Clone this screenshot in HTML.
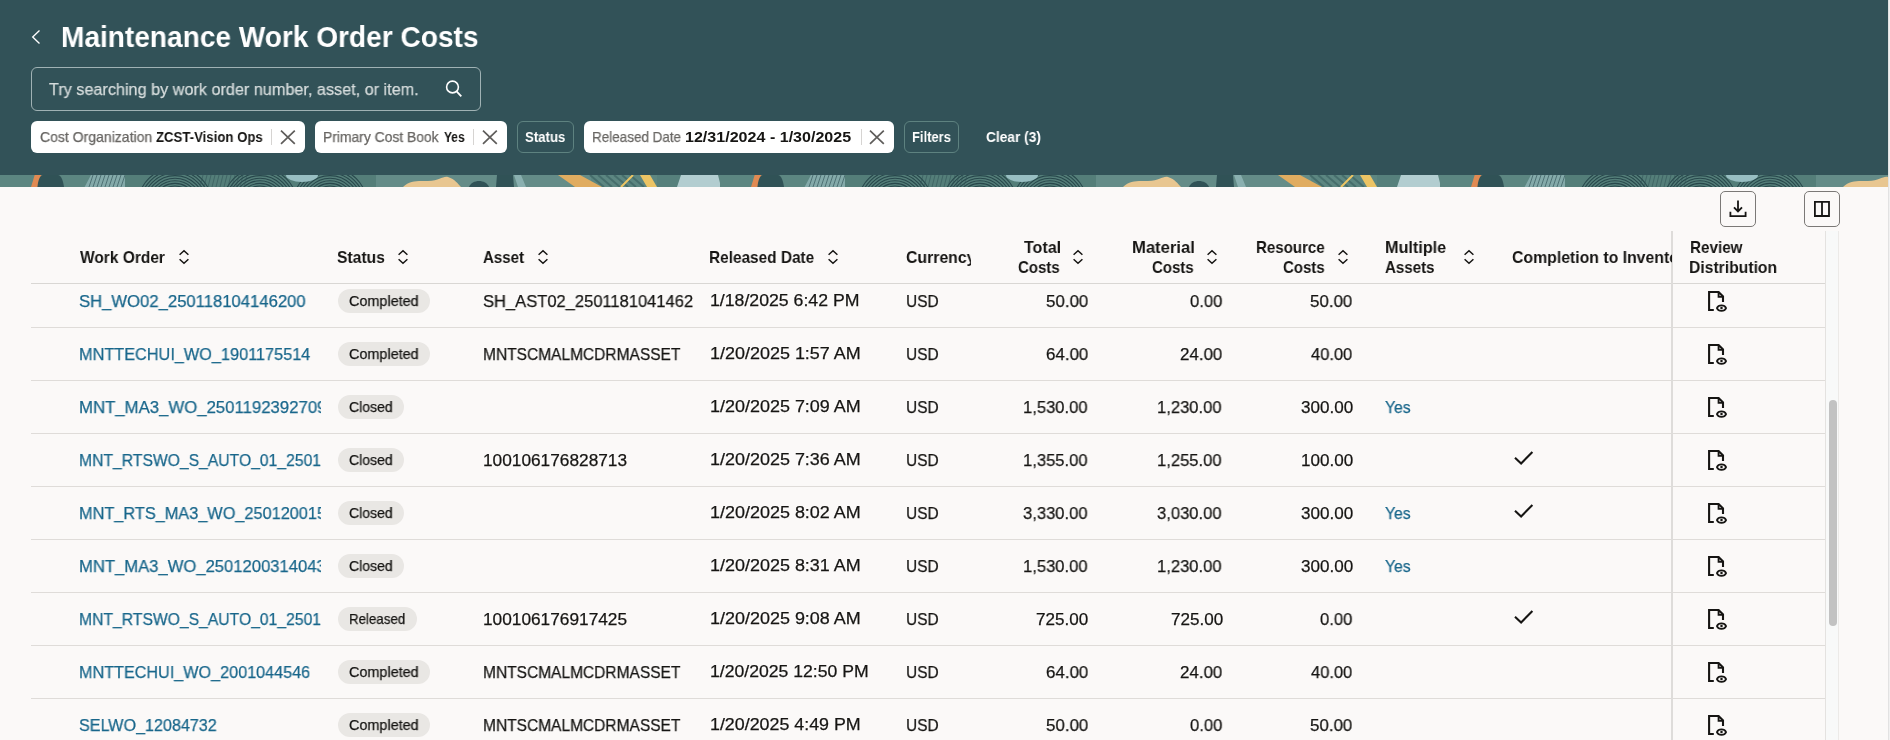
<!DOCTYPE html><html><head><meta charset="utf-8"><style>
*{box-sizing:border-box;margin:0;padding:0}
html,body{width:1890px;height:740px;overflow:hidden;background:#fbf9f8;font-family:"Liberation Sans", sans-serif;}
.t{position:absolute;white-space:pre;line-height:1;transform-origin:0 0;will-change:transform;}
.r{-webkit-text-stroke:0.25px currentColor;}
.clip{position:absolute;overflow:hidden;}
.ic{position:absolute;}
.abs{position:absolute;}
.badge{position:absolute;height:24px;border-radius:12px;background:#e9e7e4;}
.hl{position:absolute;left:31px;width:1794px;height:1px;background:#dfdcd9;}
</style></head><body>

<div class="abs" style="left:0;top:0;width:1888px;height:175px;background:rgb(50,82,88)"></div>
<div class="abs" id="strip" style="left:0;top:175px;width:1888px;height:12px;background:rgb(95,135,132);overflow:hidden"><svg width="1888" height="12" viewBox="0 0 1888 12" style="display:block"><defs><g id="tl"><rect x="0" y="0" width="720" height="12" fill="rgb(92,134,129)"/><rect x="376" y="0" width="215" height="12" fill="rgb(100,140,136)"/><rect x="657" y="0" width="24" height="12" fill="rgb(86,128,124)"/><polygon points="34.7,0 41.5,0 37.6,12 31,12" fill="rgb(224,138,82)"/><path d="M37.5 12 C38 5 40 0 43 0 H58 C61 0 63 5 64 12Z" fill="rgb(48,82,86)"/><polygon points="91,0 125,0 125,12 84.6,12" fill="rgb(132,170,170)"/><line x1="93" y1="0" x2="89" y2="12" stroke="rgb(48,82,86)" stroke-width="0.8" opacity="0.8"/><line x1="97" y1="0" x2="93" y2="12" stroke="rgb(48,82,86)" stroke-width="0.8" opacity="0.8"/><line x1="101" y1="0" x2="97" y2="12" stroke="rgb(48,82,86)" stroke-width="0.8" opacity="0.8"/><line x1="105" y1="0" x2="101" y2="12" stroke="rgb(48,82,86)" stroke-width="0.8" opacity="0.8"/><line x1="109" y1="0" x2="105" y2="12" stroke="rgb(48,82,86)" stroke-width="0.8" opacity="0.8"/><line x1="113" y1="0" x2="109" y2="12" stroke="rgb(48,82,86)" stroke-width="0.8" opacity="0.8"/><line x1="117" y1="0" x2="113" y2="12" stroke="rgb(48,82,86)" stroke-width="0.8" opacity="0.8"/><line x1="121" y1="0" x2="117" y2="12" stroke="rgb(48,82,86)" stroke-width="0.8" opacity="0.8"/><line x1="125" y1="0" x2="121" y2="12" stroke="rgb(48,82,86)" stroke-width="0.8" opacity="0.8"/><rect x="125" y="0" width="251" height="12" fill="rgb(84,126,121)"/><circle cx="175" cy="30" r="19.0" fill="none" stroke="rgb(40,72,76)" stroke-width="1.1"/><circle cx="175" cy="30" r="21.6" fill="none" stroke="rgb(40,72,76)" stroke-width="1.1"/><circle cx="175" cy="30" r="24.2" fill="none" stroke="rgb(40,72,76)" stroke-width="1.1"/><circle cx="175" cy="30" r="26.8" fill="none" stroke="rgb(40,72,76)" stroke-width="1.1"/><circle cx="175" cy="30" r="29.4" fill="none" stroke="rgb(40,72,76)" stroke-width="1.1"/><circle cx="175" cy="30" r="32.0" fill="none" stroke="rgb(40,72,76)" stroke-width="1.1"/><circle cx="175" cy="30" r="34.6" fill="none" stroke="rgb(40,72,76)" stroke-width="1.1"/><circle cx="175" cy="30" r="37.2" fill="none" stroke="rgb(40,72,76)" stroke-width="1.1"/><circle cx="260" cy="30" r="19.0" fill="none" stroke="rgb(40,72,76)" stroke-width="1.1"/><circle cx="260" cy="30" r="21.6" fill="none" stroke="rgb(40,72,76)" stroke-width="1.1"/><circle cx="260" cy="30" r="24.2" fill="none" stroke="rgb(40,72,76)" stroke-width="1.1"/><circle cx="260" cy="30" r="26.8" fill="none" stroke="rgb(40,72,76)" stroke-width="1.1"/><circle cx="260" cy="30" r="29.4" fill="none" stroke="rgb(40,72,76)" stroke-width="1.1"/><circle cx="260" cy="30" r="32.0" fill="none" stroke="rgb(40,72,76)" stroke-width="1.1"/><circle cx="260" cy="30" r="34.6" fill="none" stroke="rgb(40,72,76)" stroke-width="1.1"/><circle cx="260" cy="30" r="37.2" fill="none" stroke="rgb(40,72,76)" stroke-width="1.1"/><circle cx="330" cy="30" r="19.0" fill="none" stroke="rgb(40,72,76)" stroke-width="1.1"/><circle cx="330" cy="30" r="21.6" fill="none" stroke="rgb(40,72,76)" stroke-width="1.1"/><circle cx="330" cy="30" r="24.2" fill="none" stroke="rgb(40,72,76)" stroke-width="1.1"/><circle cx="330" cy="30" r="26.8" fill="none" stroke="rgb(40,72,76)" stroke-width="1.1"/><circle cx="330" cy="30" r="29.4" fill="none" stroke="rgb(40,72,76)" stroke-width="1.1"/><circle cx="330" cy="30" r="32.0" fill="none" stroke="rgb(40,72,76)" stroke-width="1.1"/><circle cx="330" cy="30" r="34.6" fill="none" stroke="rgb(40,72,76)" stroke-width="1.1"/><circle cx="330" cy="30" r="37.2" fill="none" stroke="rgb(40,72,76)" stroke-width="1.1"/><line x1="203" y1="0" x2="200" y2="12" stroke="rgb(48,82,86)" stroke-width="0.8" opacity="0.7"/><line x1="207" y1="0" x2="204" y2="12" stroke="rgb(48,82,86)" stroke-width="0.8" opacity="0.7"/><line x1="211" y1="0" x2="208" y2="12" stroke="rgb(48,82,86)" stroke-width="0.8" opacity="0.7"/><line x1="215" y1="0" x2="212" y2="12" stroke="rgb(48,82,86)" stroke-width="0.8" opacity="0.7"/><line x1="219" y1="0" x2="216" y2="12" stroke="rgb(48,82,86)" stroke-width="0.8" opacity="0.7"/><line x1="223" y1="0" x2="220" y2="12" stroke="rgb(48,82,86)" stroke-width="0.8" opacity="0.7"/><line x1="227" y1="0" x2="224" y2="12" stroke="rgb(48,82,86)" stroke-width="0.8" opacity="0.7"/><line x1="231" y1="0" x2="228" y2="12" stroke="rgb(48,82,86)" stroke-width="0.8" opacity="0.7"/><line x1="235" y1="0" x2="232" y2="12" stroke="rgb(48,82,86)" stroke-width="0.8" opacity="0.7"/><line x1="239" y1="0" x2="236" y2="12" stroke="rgb(48,82,86)" stroke-width="0.8" opacity="0.7"/><line x1="243" y1="0" x2="240" y2="12" stroke="rgb(48,82,86)" stroke-width="0.8" opacity="0.7"/><line x1="247" y1="0" x2="244" y2="12" stroke="rgb(48,82,86)" stroke-width="0.8" opacity="0.7"/><ellipse cx="302" cy="0" rx="16" ry="7" fill="rgb(152,190,194)"/><path d="M403 12 C410 5 418 6 428 6 C440 6 442 1 448 2 C455 4 458 9 461 12Z" fill="rgb(232,198,144)"/><path d="M469 12 C472 4 486 4 489 12Z" fill="rgb(48,82,86)"/><polygon points="497,0 513,0 514,12 496,12" fill="rgb(48,82,86)"/><polygon points="514,0 521,0 526,12 518,12" fill="rgb(138,176,176)"/><polygon points="558,0 580,0 602,12 575,12" fill="rgb(224,172,96)"/><line x1="590" y1="0" x2="604" y2="12" stroke="rgb(70,110,108)" stroke-width="2"/><line x1="598" y1="0" x2="612" y2="12" stroke="rgb(70,110,108)" stroke-width="2"/><line x1="606" y1="0" x2="620" y2="12" stroke="rgb(70,110,108)" stroke-width="2"/><line x1="614" y1="0" x2="628" y2="12" stroke="rgb(70,110,108)" stroke-width="2"/><line x1="622" y1="0" x2="636" y2="12" stroke="rgb(70,110,108)" stroke-width="2"/><line x1="630" y1="0" x2="644" y2="12" stroke="rgb(70,110,108)" stroke-width="2"/><line x1="633" y1="0" x2="621" y2="12" stroke="rgb(238,198,100)" stroke-width="2"/><polygon points="640,0 650,0 657,12 647,12" fill="rgb(236,196,100)"/><polygon points="681,0 718,0 721,12 677,12" fill="rgb(178,205,208)"/></g></defs><use href="#tl" x="0"/><use href="#tl" x="720"/><use href="#tl" x="1440"/></svg></div>
<div class="abs" style="left:1888px;top:0;width:2px;height:740px;background:#f1f1f1;border-left:1px solid #e2e2e2"></div>
<svg class="ic" style="left:28px;top:29px" width="16" height="16" viewBox="0 0 16 16"><path d="M11.5 1.4L4.7 7.9L11.5 14.4" fill="none" stroke="#fff" stroke-width="1.35"/></svg>
<div class="abs" style="left:31px;top:67px;width:450px;height:44px;border:1px solid rgb(160,178,180);border-radius:6px"></div>
<svg class="ic" style="left:441px;top:76px" width="24" height="24" viewBox="0 0 24 24"><circle cx="11.5" cy="11" r="5.9" fill="none" stroke="#fff" stroke-width="1.6"/><path d="M15.6 15.3L20.3 20.3" stroke="#fff" stroke-width="1.8"/></svg>
<div class="abs" style="left:31px;top:121px;width:274px;height:32px;background:#fff;border-radius:6px"></div>
<div class="abs" style="left:271px;top:129px;width:1px;height:16px;background:#d6d4d2"></div>
<svg class="ic" style="left:278px;top:127px" width="20" height="20" viewBox="0 0 20 20"><path d="M3 3.6L16.8 16.8M16.8 3.6L3 16.8" stroke="#5f5d5b" stroke-width="1.7"/></svg>
<div class="abs" style="left:315px;top:121px;width:192px;height:32px;background:#fff;border-radius:6px"></div>
<div class="abs" style="left:473px;top:129px;width:1px;height:16px;background:#d6d4d2"></div>
<svg class="ic" style="left:480px;top:127px" width="20" height="20" viewBox="0 0 20 20"><path d="M3 3.6L16.8 16.8M16.8 3.6L3 16.8" stroke="#5f5d5b" stroke-width="1.7"/></svg>
<div class="abs" style="left:517px;top:121px;width:57px;height:32px;border:1px solid rgb(94,130,128);border-radius:6px"></div>
<div class="abs" style="left:584px;top:121px;width:310px;height:32px;background:#fff;border-radius:6px"></div>
<div class="abs" style="left:861px;top:129px;width:1px;height:16px;background:#d6d4d2"></div>
<svg class="ic" style="left:867px;top:127px" width="20" height="20" viewBox="0 0 20 20"><path d="M3 3.6L16.8 16.8M16.8 3.6L3 16.8" stroke="#5f5d5b" stroke-width="1.7"/></svg>
<div class="abs" style="left:904px;top:121px;width:55px;height:32px;border:1px solid rgb(94,130,128);border-radius:6px"></div>

<div class="abs" style="left:1720px;top:191px;width:36px;height:36px;border:1px solid #7b7977;border-radius:5px"></div>
<svg class="ic" style="left:1726px;top:197px" width="24" height="24" viewBox="0 0 24 24"><path d="M12 3.4V14.4M8 10.3L12 14.4L16 10.3M4.4 14.8V19.2H19.6V14.8" fill="none" stroke="#161513" stroke-width="1.8"/></svg>
<div class="abs" style="left:1804px;top:191px;width:36px;height:36px;border:1px solid #7b7977;border-radius:5px"></div>
<svg class="ic" style="left:1810px;top:197px" width="24" height="24" viewBox="0 0 24 24"><path d="M4.9 4.9H19V19H4.9ZM12 4.9V19" fill="none" stroke="#161513" stroke-width="1.8"/></svg>

<div class="abs" style="left:31px;top:283px;width:1794px;height:1px;background:#d9d7d4"></div>
<div class="hl" style="top:327px"></div><div class="hl" style="top:380px"></div><div class="hl" style="top:433px"></div><div class="hl" style="top:486px"></div><div class="hl" style="top:539px"></div><div class="hl" style="top:592px"></div><div class="hl" style="top:645px"></div><div class="hl" style="top:698px"></div>
<div class="abs" style="left:1671px;top:231px;width:2px;height:509px;background:#dedcda"></div>
<div class="abs" style="left:1825px;top:231px;width:1px;height:509px;background:#e4e2e0"></div>
<div class="abs" style="left:1826px;top:231px;width:13px;height:509px;background:#f8f9f9;border-right:1px solid #eceae8"></div>
<div class="abs" style="left:1829px;top:400px;width:8px;height:226px;border-radius:4px;background:#c2c2c2"></div>
<svg class="ic" style="left:177.5px;top:249px" width="12" height="16" viewBox="0 0 12 16"><path d="M1.6 5.8L6 1.7L10.4 5.8M1.6 10.2L6 14.3L10.4 10.2" fill="none" stroke="#161513" stroke-width="1.5"/></svg><svg class="ic" style="left:396.6px;top:249px" width="12" height="16" viewBox="0 0 12 16"><path d="M1.6 5.8L6 1.7L10.4 5.8M1.6 10.2L6 14.3L10.4 10.2" fill="none" stroke="#161513" stroke-width="1.5"/></svg><svg class="ic" style="left:536.6px;top:249px" width="12" height="16" viewBox="0 0 12 16"><path d="M1.6 5.8L6 1.7L10.4 5.8M1.6 10.2L6 14.3L10.4 10.2" fill="none" stroke="#161513" stroke-width="1.5"/></svg><svg class="ic" style="left:826.7px;top:249px" width="12" height="16" viewBox="0 0 12 16"><path d="M1.6 5.8L6 1.7L10.4 5.8M1.6 10.2L6 14.3L10.4 10.2" fill="none" stroke="#161513" stroke-width="1.5"/></svg><svg class="ic" style="left:1071.6px;top:249px" width="12" height="16" viewBox="0 0 12 16"><path d="M1.6 5.8L6 1.7L10.4 5.8M1.6 10.2L6 14.3L10.4 10.2" fill="none" stroke="#161513" stroke-width="1.5"/></svg><svg class="ic" style="left:1206.1px;top:249px" width="12" height="16" viewBox="0 0 12 16"><path d="M1.6 5.8L6 1.7L10.4 5.8M1.6 10.2L6 14.3L10.4 10.2" fill="none" stroke="#161513" stroke-width="1.5"/></svg><svg class="ic" style="left:1336.6px;top:249px" width="12" height="16" viewBox="0 0 12 16"><path d="M1.6 5.8L6 1.7L10.4 5.8M1.6 10.2L6 14.3L10.4 10.2" fill="none" stroke="#161513" stroke-width="1.5"/></svg><svg class="ic" style="left:1462.9px;top:249px" width="12" height="16" viewBox="0 0 12 16"><path d="M1.6 5.8L6 1.7L10.4 5.8M1.6 10.2L6 14.3L10.4 10.2" fill="none" stroke="#161513" stroke-width="1.5"/></svg>
<div class="badge" style="left:338px;top:289px;width:92px"></div><svg class="ic" style="left:1704px;top:289px" width="24" height="24" viewBox="0 0 24 24"><path d="M9.8 21H5.1V3H14.6L19 7.4V13" fill="none" stroke="#161513" stroke-width="2.1"/><path d="M14.6 3V7.9H19" fill="none" stroke="#161513" stroke-width="1.9"/><path d="M12.9 19.1C14.5 15.5 20.5 15.5 22.1 19.1C20.5 22.7 14.5 22.7 12.9 19.1Z" fill="none" stroke="#161513" stroke-width="1.7"/><circle cx="17.5" cy="19.1" r="1.25" fill="#161513"/></svg><div class="badge" style="left:338px;top:342px;width:92px"></div><svg class="ic" style="left:1704px;top:342px" width="24" height="24" viewBox="0 0 24 24"><path d="M9.8 21H5.1V3H14.6L19 7.4V13" fill="none" stroke="#161513" stroke-width="2.1"/><path d="M14.6 3V7.9H19" fill="none" stroke="#161513" stroke-width="1.9"/><path d="M12.9 19.1C14.5 15.5 20.5 15.5 22.1 19.1C20.5 22.7 14.5 22.7 12.9 19.1Z" fill="none" stroke="#161513" stroke-width="1.7"/><circle cx="17.5" cy="19.1" r="1.25" fill="#161513"/></svg><div class="badge" style="left:338px;top:395px;width:66px"></div><svg class="ic" style="left:1704px;top:395px" width="24" height="24" viewBox="0 0 24 24"><path d="M9.8 21H5.1V3H14.6L19 7.4V13" fill="none" stroke="#161513" stroke-width="2.1"/><path d="M14.6 3V7.9H19" fill="none" stroke="#161513" stroke-width="1.9"/><path d="M12.9 19.1C14.5 15.5 20.5 15.5 22.1 19.1C20.5 22.7 14.5 22.7 12.9 19.1Z" fill="none" stroke="#161513" stroke-width="1.7"/><circle cx="17.5" cy="19.1" r="1.25" fill="#161513"/></svg><div class="badge" style="left:338px;top:448px;width:66px"></div><svg class="ic" style="left:1512px;top:448px" width="24" height="24" viewBox="0 0 24 24"><path d="M3 9.8 L9.1 15.5 L20.4 3.9" fill="none" stroke="#161513" stroke-width="2.1"/></svg><svg class="ic" style="left:1704px;top:448px" width="24" height="24" viewBox="0 0 24 24"><path d="M9.8 21H5.1V3H14.6L19 7.4V13" fill="none" stroke="#161513" stroke-width="2.1"/><path d="M14.6 3V7.9H19" fill="none" stroke="#161513" stroke-width="1.9"/><path d="M12.9 19.1C14.5 15.5 20.5 15.5 22.1 19.1C20.5 22.7 14.5 22.7 12.9 19.1Z" fill="none" stroke="#161513" stroke-width="1.7"/><circle cx="17.5" cy="19.1" r="1.25" fill="#161513"/></svg><div class="badge" style="left:338px;top:501px;width:66px"></div><svg class="ic" style="left:1512px;top:501px" width="24" height="24" viewBox="0 0 24 24"><path d="M3 9.8 L9.1 15.5 L20.4 3.9" fill="none" stroke="#161513" stroke-width="2.1"/></svg><svg class="ic" style="left:1704px;top:501px" width="24" height="24" viewBox="0 0 24 24"><path d="M9.8 21H5.1V3H14.6L19 7.4V13" fill="none" stroke="#161513" stroke-width="2.1"/><path d="M14.6 3V7.9H19" fill="none" stroke="#161513" stroke-width="1.9"/><path d="M12.9 19.1C14.5 15.5 20.5 15.5 22.1 19.1C20.5 22.7 14.5 22.7 12.9 19.1Z" fill="none" stroke="#161513" stroke-width="1.7"/><circle cx="17.5" cy="19.1" r="1.25" fill="#161513"/></svg><div class="badge" style="left:338px;top:554px;width:66px"></div><svg class="ic" style="left:1704px;top:554px" width="24" height="24" viewBox="0 0 24 24"><path d="M9.8 21H5.1V3H14.6L19 7.4V13" fill="none" stroke="#161513" stroke-width="2.1"/><path d="M14.6 3V7.9H19" fill="none" stroke="#161513" stroke-width="1.9"/><path d="M12.9 19.1C14.5 15.5 20.5 15.5 22.1 19.1C20.5 22.7 14.5 22.7 12.9 19.1Z" fill="none" stroke="#161513" stroke-width="1.7"/><circle cx="17.5" cy="19.1" r="1.25" fill="#161513"/></svg><div class="badge" style="left:338px;top:607px;width:79px"></div><svg class="ic" style="left:1512px;top:607px" width="24" height="24" viewBox="0 0 24 24"><path d="M3 9.8 L9.1 15.5 L20.4 3.9" fill="none" stroke="#161513" stroke-width="2.1"/></svg><svg class="ic" style="left:1704px;top:607px" width="24" height="24" viewBox="0 0 24 24"><path d="M9.8 21H5.1V3H14.6L19 7.4V13" fill="none" stroke="#161513" stroke-width="2.1"/><path d="M14.6 3V7.9H19" fill="none" stroke="#161513" stroke-width="1.9"/><path d="M12.9 19.1C14.5 15.5 20.5 15.5 22.1 19.1C20.5 22.7 14.5 22.7 12.9 19.1Z" fill="none" stroke="#161513" stroke-width="1.7"/><circle cx="17.5" cy="19.1" r="1.25" fill="#161513"/></svg><div class="badge" style="left:338px;top:660px;width:92px"></div><svg class="ic" style="left:1704px;top:660px" width="24" height="24" viewBox="0 0 24 24"><path d="M9.8 21H5.1V3H14.6L19 7.4V13" fill="none" stroke="#161513" stroke-width="2.1"/><path d="M14.6 3V7.9H19" fill="none" stroke="#161513" stroke-width="1.9"/><path d="M12.9 19.1C14.5 15.5 20.5 15.5 22.1 19.1C20.5 22.7 14.5 22.7 12.9 19.1Z" fill="none" stroke="#161513" stroke-width="1.7"/><circle cx="17.5" cy="19.1" r="1.25" fill="#161513"/></svg><div class="badge" style="left:338px;top:713px;width:92px"></div><svg class="ic" style="left:1704px;top:713px" width="24" height="24" viewBox="0 0 24 24"><path d="M9.8 21H5.1V3H14.6L19 7.4V13" fill="none" stroke="#161513" stroke-width="2.1"/><path d="M14.6 3V7.9H19" fill="none" stroke="#161513" stroke-width="1.9"/><path d="M12.9 19.1C14.5 15.5 20.5 15.5 22.1 19.1C20.5 22.7 14.5 22.7 12.9 19.1Z" fill="none" stroke="#161513" stroke-width="1.7"/><circle cx="17.5" cy="19.1" r="1.25" fill="#161513"/></svg>
<div class="t" style="left:61.36px;top:22.75px;font-size:29px;color:#fff;font-weight:700;transform:scaleX(0.9678);">Maintenance Work Order Costs</div><div class="t r" style="left:48.50px;top:81.82px;font-size:16.8px;color:rgb(214,220,220);transform:scaleX(0.9661);">Try searching by work order number, asset, or item.</div><div class="t r" style="left:39.73px;top:130.18px;font-size:14.5px;color:rgb(104,102,99);transform:scaleX(0.9667);">Cost Organization</div><div class="t" style="left:155.90px;top:130.18px;font-size:14.5px;color:#161513;font-weight:700;transform:scaleX(0.9094);">ZCST-Vision Ops</div><div class="t r" style="left:323.14px;top:130.18px;font-size:14.5px;color:rgb(104,102,99);transform:scaleX(0.9567);">Primary Cost Book</div><div class="t" style="left:443.70px;top:130.18px;font-size:14.5px;color:#161513;font-weight:700;transform:scaleX(0.8240);">Yes</div><div class="t" style="left:524.79px;top:130.18px;font-size:14.5px;color:#fff;font-weight:700;transform:scaleX(0.9093);">Status</div><div class="t r" style="left:592.07px;top:130.18px;font-size:14.5px;color:rgb(104,102,99);transform:scaleX(0.9287);">Released Date</div><div class="t" style="left:684.59px;top:130.18px;font-size:14.5px;color:#161513;font-weight:700;transform:scaleX(1.1081);">12/31/2024 - 1/30/2025</div><div class="t" style="left:911.81px;top:130.18px;font-size:14.5px;color:#fff;font-weight:700;transform:scaleX(0.8929);">Filters</div><div class="t" style="left:985.75px;top:130.18px;font-size:14.5px;color:#fff;font-weight:700;transform:scaleX(0.9456);">Clear (3)</div><div class="t" style="left:80.10px;top:249.15px;font-size:17px;color:#161513;font-weight:700;transform:scaleX(0.9108);">Work Order</div><div class="t" style="left:336.78px;top:249.15px;font-size:17px;color:#161513;font-weight:700;transform:scaleX(0.9220);">Status</div><div class="t" style="left:483.12px;top:249.15px;font-size:17px;color:#161513;font-weight:700;transform:scaleX(0.8844);">Asset</div><div class="t" style="left:709.39px;top:249.15px;font-size:17px;color:#161513;font-weight:700;transform:scaleX(0.9052);">Released Date</div><div class="clip" style="left:906.07px;top:245.15px;width:65.33px;height:25px"><div class="t" style="left:0;top:4px;font-size:17px;color:#161513;font-weight:700;transform:scaleX(0.9300)">Currency</div></div><div class="t" style="left:1023.70px;top:239.15px;font-size:17px;color:#161513;font-weight:700;transform:scaleX(0.9447);">Total</div><div class="t" style="left:1018.12px;top:259.35px;font-size:17px;color:#161513;font-weight:700;transform:scaleX(0.8826);">Costs</div><div class="t" style="left:1132.02px;top:239.15px;font-size:17px;color:#161513;font-weight:700;transform:scaleX(0.9790);">Material</div><div class="t" style="left:1152.22px;top:259.35px;font-size:17px;color:#161513;font-weight:700;transform:scaleX(0.8826);">Costs</div><div class="t" style="left:1255.71px;top:239.15px;font-size:17px;color:#161513;font-weight:700;transform:scaleX(0.8868);">Resource</div><div class="t" style="left:1282.52px;top:259.35px;font-size:17px;color:#161513;font-weight:700;transform:scaleX(0.8826);">Costs</div><div class="t" style="left:1385.05px;top:239.15px;font-size:17px;color:#161513;font-weight:700;transform:scaleX(0.9524);">Multiple</div><div class="t" style="left:1385.11px;top:259.35px;font-size:17px;color:#161513;font-weight:700;transform:scaleX(0.8870);">Assets</div><div class="clip" style="left:1511.57px;top:245.15px;width:160.43px;height:25px"><div class="t" style="left:0;top:4px;font-size:17px;color:#161513;font-weight:700;transform:scaleX(0.9300)">Completion to Inventory</div></div><div class="t" style="left:1689.50px;top:239.15px;font-size:17px;color:#161513;font-weight:700;transform:scaleX(0.8966);">Review</div><div class="t" style="left:1689.48px;top:259.35px;font-size:17px;color:#161513;font-weight:700;transform:scaleX(0.9234);">Distribution</div><div class="clip" style="left:79.12px;top:288.75px;width:241.88px;height:25px"><div class="t r" style="left:0;top:4px;font-size:17px;color:rgb(24,102,139);font-weight:400;transform:scaleX(0.9800)">SH_WO02_250118104146200</div></div><div class="t r" style="left:348.71px;top:294.38px;font-size:14.5px;color:#161513;transform:scaleX(0.9926);">Completed</div><div class="t r" style="left:483.03px;top:292.75px;font-size:17px;color:#161513;transform:scaleX(0.9721);">SH_AST02_2501181041462</div><div class="t r" style="left:709.76px;top:291.95px;font-size:17px;color:#161513;transform:scaleX(1.0404);">1/18/2025 6:42 PM</div><div class="t r" style="left:906.09px;top:292.75px;font-size:17px;color:#161513;transform:scaleX(0.9118);">USD</div><div class="t r" style="left:1045.61px;top:292.75px;font-size:17px;color:#161513;transform:scaleX(0.9927);">50.00</div><div class="t r" style="left:1189.53px;top:292.75px;font-size:17px;color:#161513;transform:scaleX(0.9750);">0.00</div><div class="t r" style="left:1310.41px;top:292.75px;font-size:17px;color:#161513;transform:scaleX(0.9927);">50.00</div><div class="clip" style="left:79.14px;top:341.75px;width:241.86px;height:25px"><div class="t r" style="left:0;top:4px;font-size:17px;color:rgb(24,102,139);font-weight:400;transform:scaleX(0.9575)">MNTTECHUI_WO_1901175514</div></div><div class="t r" style="left:348.71px;top:347.38px;font-size:14.5px;color:#161513;transform:scaleX(0.9926);">Completed</div><div class="t r" style="left:483.09px;top:345.75px;font-size:17px;color:#161513;transform:scaleX(0.9126);">MNTSCMALMCDRMASSET</div><div class="t r" style="left:709.74px;top:344.95px;font-size:17px;color:#161513;transform:scaleX(1.0564);">1/20/2025 1:57 AM</div><div class="t r" style="left:906.09px;top:345.75px;font-size:17px;color:#161513;transform:scaleX(0.9118);">USD</div><div class="t r" style="left:1045.61px;top:345.75px;font-size:17px;color:#161513;transform:scaleX(0.9927);">64.00</div><div class="t r" style="left:1180.01px;top:345.75px;font-size:17px;color:#161513;transform:scaleX(0.9927);">24.00</div><div class="t r" style="left:1311.40px;top:345.75px;font-size:17px;color:#161513;transform:scaleX(0.9690);">40.00</div><div class="clip" style="left:79.11px;top:394.75px;width:241.89px;height:25px"><div class="t r" style="left:0;top:4px;font-size:17px;color:rgb(24,102,139);font-weight:400;transform:scaleX(0.9855)">MNT_MA3_WO_2501192392709</div></div><div class="t r" style="left:348.73px;top:400.38px;font-size:14.5px;color:#161513;transform:scaleX(0.9674);">Closed</div><div class="t r" style="left:709.74px;top:397.95px;font-size:17px;color:#161513;transform:scaleX(1.0564);">1/20/2025 7:09 AM</div><div class="t r" style="left:906.09px;top:398.75px;font-size:17px;color:#161513;transform:scaleX(0.9118);">USD</div><div class="t r" style="left:1022.92px;top:398.75px;font-size:17px;color:#161513;transform:scaleX(0.9754);">1,530.00</div><div class="t r" style="left:1157.32px;top:398.75px;font-size:17px;color:#161513;transform:scaleX(0.9754);">1,230.00</div><div class="t r" style="left:1300.90px;top:398.75px;font-size:17px;color:#161513;transform:scaleX(1.0040);">300.00</div><div class="t r" style="left:1384.88px;top:398.75px;font-size:17px;color:rgb(24,102,139);transform:scaleX(0.9231);">Yes</div><div class="clip" style="left:79.18px;top:447.75px;width:241.82px;height:25px"><div class="t r" style="left:0;top:4px;font-size:17px;color:rgb(24,102,139);font-weight:400;transform:scaleX(0.9235)">MNT_RTSWO_S_AUTO_01_2501</div></div><div class="t r" style="left:348.73px;top:453.38px;font-size:14.5px;color:#161513;transform:scaleX(0.9674);">Closed</div><div class="t r" style="left:482.98px;top:451.75px;font-size:17px;color:#161513;transform:scaleX(1.0157);">100106176828713</div><div class="t r" style="left:709.74px;top:450.95px;font-size:17px;color:#161513;transform:scaleX(1.0564);">1/20/2025 7:36 AM</div><div class="t r" style="left:906.09px;top:451.75px;font-size:17px;color:#161513;transform:scaleX(0.9118);">USD</div><div class="t r" style="left:1022.92px;top:451.75px;font-size:17px;color:#161513;transform:scaleX(0.9754);">1,355.00</div><div class="t r" style="left:1157.32px;top:451.75px;font-size:17px;color:#161513;transform:scaleX(0.9754);">1,255.00</div><div class="t r" style="left:1300.90px;top:451.75px;font-size:17px;color:#161513;transform:scaleX(1.0040);">100.00</div><div class="clip" style="left:79.14px;top:500.75px;width:241.86px;height:25px"><div class="t r" style="left:0;top:4px;font-size:17px;color:rgb(24,102,139);font-weight:400;transform:scaleX(0.9586)">MNT_RTS_MA3_WO_250120015</div></div><div class="t r" style="left:348.73px;top:506.38px;font-size:14.5px;color:#161513;transform:scaleX(0.9674);">Closed</div><div class="t r" style="left:709.74px;top:503.95px;font-size:17px;color:#161513;transform:scaleX(1.0564);">1/20/2025 8:02 AM</div><div class="t r" style="left:906.09px;top:504.75px;font-size:17px;color:#161513;transform:scaleX(0.9118);">USD</div><div class="t r" style="left:1022.92px;top:504.75px;font-size:17px;color:#161513;transform:scaleX(0.9754);">3,330.00</div><div class="t r" style="left:1157.32px;top:504.75px;font-size:17px;color:#161513;transform:scaleX(0.9754);">3,030.00</div><div class="t r" style="left:1300.90px;top:504.75px;font-size:17px;color:#161513;transform:scaleX(1.0040);">300.00</div><div class="t r" style="left:1384.88px;top:504.75px;font-size:17px;color:rgb(24,102,139);transform:scaleX(0.9231);">Yes</div><div class="clip" style="left:79.12px;top:553.75px;width:241.88px;height:25px"><div class="t r" style="left:0;top:4px;font-size:17px;color:rgb(24,102,139);font-weight:400;transform:scaleX(0.9777)">MNT_MA3_WO_2501200314043</div></div><div class="t r" style="left:348.73px;top:559.38px;font-size:14.5px;color:#161513;transform:scaleX(0.9674);">Closed</div><div class="t r" style="left:709.74px;top:556.95px;font-size:17px;color:#161513;transform:scaleX(1.0564);">1/20/2025 8:31 AM</div><div class="t r" style="left:906.09px;top:557.75px;font-size:17px;color:#161513;transform:scaleX(0.9118);">USD</div><div class="t r" style="left:1022.92px;top:557.75px;font-size:17px;color:#161513;transform:scaleX(0.9754);">1,530.00</div><div class="t r" style="left:1157.32px;top:557.75px;font-size:17px;color:#161513;transform:scaleX(0.9754);">1,230.00</div><div class="t r" style="left:1300.90px;top:557.75px;font-size:17px;color:#161513;transform:scaleX(1.0040);">300.00</div><div class="t r" style="left:1384.88px;top:557.75px;font-size:17px;color:rgb(24,102,139);transform:scaleX(0.9231);">Yes</div><div class="clip" style="left:79.18px;top:606.75px;width:241.82px;height:25px"><div class="t r" style="left:0;top:4px;font-size:17px;color:rgb(24,102,139);font-weight:400;transform:scaleX(0.9235)">MNT_RTSWO_S_AUTO_01_2501</div></div><div class="t r" style="left:348.78px;top:612.38px;font-size:14.5px;color:#161513;transform:scaleX(0.9167);">Released</div><div class="t r" style="left:482.98px;top:610.75px;font-size:17px;color:#161513;transform:scaleX(1.0157);">100106176917425</div><div class="t r" style="left:709.74px;top:609.95px;font-size:17px;color:#161513;transform:scaleX(1.0564);">1/20/2025 9:08 AM</div><div class="t r" style="left:906.09px;top:610.75px;font-size:17px;color:#161513;transform:scaleX(0.9118);">USD</div><div class="t r" style="left:1036.10px;top:610.75px;font-size:17px;color:#161513;transform:scaleX(1.0040);">725.00</div><div class="t r" style="left:1170.50px;top:610.75px;font-size:17px;color:#161513;transform:scaleX(1.0040);">725.00</div><div class="t r" style="left:1319.92px;top:610.75px;font-size:17px;color:#161513;transform:scaleX(0.9750);">0.00</div><div class="clip" style="left:79.15px;top:659.75px;width:241.85px;height:25px"><div class="t r" style="left:0;top:4px;font-size:17px;color:rgb(24,102,139);font-weight:400;transform:scaleX(0.9519)">MNTTECHUI_WO_2001044546</div></div><div class="t r" style="left:348.71px;top:665.38px;font-size:14.5px;color:#161513;transform:scaleX(0.9926);">Completed</div><div class="t r" style="left:483.09px;top:663.75px;font-size:17px;color:#161513;transform:scaleX(0.9126);">MNTSCMALMCDRMASSET</div><div class="t r" style="left:709.76px;top:662.95px;font-size:17px;color:#161513;transform:scaleX(1.0358);">1/20/2025 12:50 PM</div><div class="t r" style="left:906.09px;top:663.75px;font-size:17px;color:#161513;transform:scaleX(0.9118);">USD</div><div class="t r" style="left:1045.61px;top:663.75px;font-size:17px;color:#161513;transform:scaleX(0.9927);">64.00</div><div class="t r" style="left:1180.01px;top:663.75px;font-size:17px;color:#161513;transform:scaleX(0.9927);">24.00</div><div class="t r" style="left:1311.40px;top:663.75px;font-size:17px;color:#161513;transform:scaleX(0.9690);">40.00</div><div class="clip" style="left:79.15px;top:712.75px;width:241.85px;height:25px"><div class="t r" style="left:0;top:4px;font-size:17px;color:rgb(24,102,139);font-weight:400;transform:scaleX(0.9486)">SELWO_12084732</div></div><div class="t r" style="left:348.71px;top:718.38px;font-size:14.5px;color:#161513;transform:scaleX(0.9926);">Completed</div><div class="t r" style="left:483.09px;top:716.75px;font-size:17px;color:#161513;transform:scaleX(0.9126);">MNTSCMALMCDRMASSET</div><div class="t r" style="left:709.75px;top:715.95px;font-size:17px;color:#161513;transform:scaleX(1.0489);">1/20/2025 4:49 PM</div><div class="t r" style="left:906.09px;top:716.75px;font-size:17px;color:#161513;transform:scaleX(0.9118);">USD</div><div class="t r" style="left:1045.61px;top:716.75px;font-size:17px;color:#161513;transform:scaleX(0.9927);">50.00</div><div class="t r" style="left:1189.53px;top:716.75px;font-size:17px;color:#161513;transform:scaleX(0.9750);">0.00</div><div class="t r" style="left:1310.41px;top:716.75px;font-size:17px;color:#161513;transform:scaleX(0.9927);">50.00</div>
</body></html>
